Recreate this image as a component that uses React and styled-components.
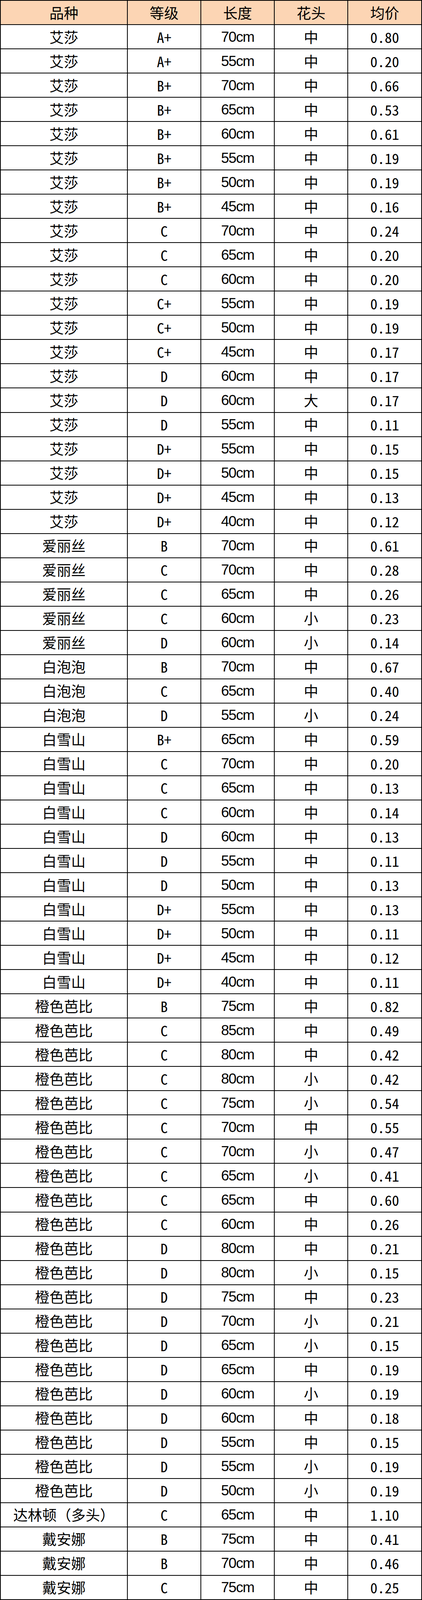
import styled, { createGlobalStyle } from "styled-components";

const GlobalStyle = createGlobalStyle`
  html, body {
    margin: 0;
    padding: 0;
    background: #fff;
  }
  body {
    font-family: "Noto Sans CJK SC", "Noto Sans", sans-serif;
    color: #000;
  }
`;

const headers = ["品种", "等级", "长度", "花头", "均价"];

// [品种, 等级, 长度, 花头, 均价]
const rows = [
  ["艾莎", "A+", "70cm", "中", "0.80"],
  ["艾莎", "A+", "55cm", "中", "0.20"],
  ["艾莎", "B+", "70cm", "中", "0.66"],
  ["艾莎", "B+", "65cm", "中", "0.53"],
  ["艾莎", "B+", "60cm", "中", "0.61"],
  ["艾莎", "B+", "55cm", "中", "0.19"],
  ["艾莎", "B+", "50cm", "中", "0.19"],
  ["艾莎", "B+", "45cm", "中", "0.16"],
  ["艾莎", "C", "70cm", "中", "0.24"],
  ["艾莎", "C", "65cm", "中", "0.20"],
  ["艾莎", "C", "60cm", "中", "0.20"],
  ["艾莎", "C+", "55cm", "中", "0.19"],
  ["艾莎", "C+", "50cm", "中", "0.19"],
  ["艾莎", "C+", "45cm", "中", "0.17"],
  ["艾莎", "D", "60cm", "中", "0.17"],
  ["艾莎", "D", "60cm", "大", "0.17"],
  ["艾莎", "D", "55cm", "中", "0.11"],
  ["艾莎", "D+", "55cm", "中", "0.15"],
  ["艾莎", "D+", "50cm", "中", "0.15"],
  ["艾莎", "D+", "45cm", "中", "0.13"],
  ["艾莎", "D+", "40cm", "中", "0.12"],
  ["爱丽丝", "B", "70cm", "中", "0.61"],
  ["爱丽丝", "C", "70cm", "中", "0.28"],
  ["爱丽丝", "C", "65cm", "中", "0.26"],
  ["爱丽丝", "C", "60cm", "小", "0.23"],
  ["爱丽丝", "D", "60cm", "小", "0.14"],
  ["白泡泡", "B", "70cm", "中", "0.67"],
  ["白泡泡", "C", "65cm", "中", "0.40"],
  ["白泡泡", "D", "55cm", "小", "0.24"],
  ["白雪山", "B+", "65cm", "中", "0.59"],
  ["白雪山", "C", "70cm", "中", "0.20"],
  ["白雪山", "C", "65cm", "中", "0.13"],
  ["白雪山", "C", "60cm", "中", "0.14"],
  ["白雪山", "D", "60cm", "中", "0.13"],
  ["白雪山", "D", "55cm", "中", "0.11"],
  ["白雪山", "D", "50cm", "中", "0.13"],
  ["白雪山", "D+", "55cm", "中", "0.13"],
  ["白雪山", "D+", "50cm", "中", "0.11"],
  ["白雪山", "D+", "45cm", "中", "0.12"],
  ["白雪山", "D+", "40cm", "中", "0.11"],
  ["橙色芭比", "B", "75cm", "中", "0.82"],
  ["橙色芭比", "C", "85cm", "中", "0.49"],
  ["橙色芭比", "C", "80cm", "中", "0.42"],
  ["橙色芭比", "C", "80cm", "小", "0.42"],
  ["橙色芭比", "C", "75cm", "小", "0.54"],
  ["橙色芭比", "C", "70cm", "中", "0.55"],
  ["橙色芭比", "C", "70cm", "小", "0.47"],
  ["橙色芭比", "C", "65cm", "小", "0.41"],
  ["橙色芭比", "C", "65cm", "中", "0.60"],
  ["橙色芭比", "C", "60cm", "中", "0.26"],
  ["橙色芭比", "D", "80cm", "中", "0.21"],
  ["橙色芭比", "D", "80cm", "小", "0.15"],
  ["橙色芭比", "D", "75cm", "中", "0.23"],
  ["橙色芭比", "D", "70cm", "小", "0.21"],
  ["橙色芭比", "D", "65cm", "小", "0.15"],
  ["橙色芭比", "D", "65cm", "中", "0.19"],
  ["橙色芭比", "D", "60cm", "小", "0.19"],
  ["橙色芭比", "D", "60cm", "中", "0.18"],
  ["橙色芭比", "D", "55cm", "中", "0.15"],
  ["橙色芭比", "D", "55cm", "小", "0.19"],
  ["橙色芭比", "D", "50cm", "小", "0.19"],
  ["达林顿（多头）", "C", "65cm", "中", "1.10"],
  ["戴安娜", "B", "75cm", "中", "0.41"],
  ["戴安娜", "B", "70cm", "中", "0.46"],
  ["戴安娜", "C", "75cm", "中", "0.25"],
];

// grade + price columns render in a half-width mono face, length in an arial-like face
const fontFor = (col) => {
  if (col === 1 || col === 4) return "mono";
  if (col === 2) return "latin";
  return "cjk";
};

const App = () => {
  return (
    <>
      <GlobalStyle />
      <Sheet>
        {headers.map((h) => (
          <Cell key={h} head kind="cjk">
            {h}
          </Cell>
        ))}
        {rows.map((row, r) =>
          row.map((v, c) => (
            <Cell key={r + "-" + c} kind={fontFor(c)}>
              {v}
            </Cell>
          ))
        )}
      </Sheet>
    </>
  );
};

// the sheet fills the window: 66 equal rows down its height
const Sheet = styled.div`
  width: 1080px;
  height: 100vh;
  box-sizing: border-box;
  display: grid;
  grid-template-columns: 325px 188px 188px 188px 189px;
  grid-template-rows: repeat(66, minmax(0, 1fr));
  border-left: 2px solid #000;
  border-top: 2px solid #000;
  background: #fff;
`;

const Cell = styled.div.withConfig({
  shouldForwardProp: (p) => p !== "head" && p !== "kind",
})`
  box-sizing: border-box;
  min-height: 0;
  overflow: hidden;
  border-right: 2px solid #000;
  border-bottom: 2px solid #000;
  background: ${(p) => (p.head ? "#fcd5b4" : "#fff")};
  display: flex;
  align-items: center;
  justify-content: center;
  white-space: nowrap;
  color: #000;
  font-size: 37px;
  line-height: 1;
  font-family: ${(p) =>
    p.kind === "mono"
      ? `"Noto Sans Mono CJK SC", "Noto Sans CJK SC", monospace`
      : p.kind === "latin"
      ? `"Liberation Sans", Arial, sans-serif`
      : `"Noto Sans CJK SC", sans-serif`};
  letter-spacing: ${(p) => (p.kind === "latin" ? "-1.5px" : "0")};
`;

export default App;
